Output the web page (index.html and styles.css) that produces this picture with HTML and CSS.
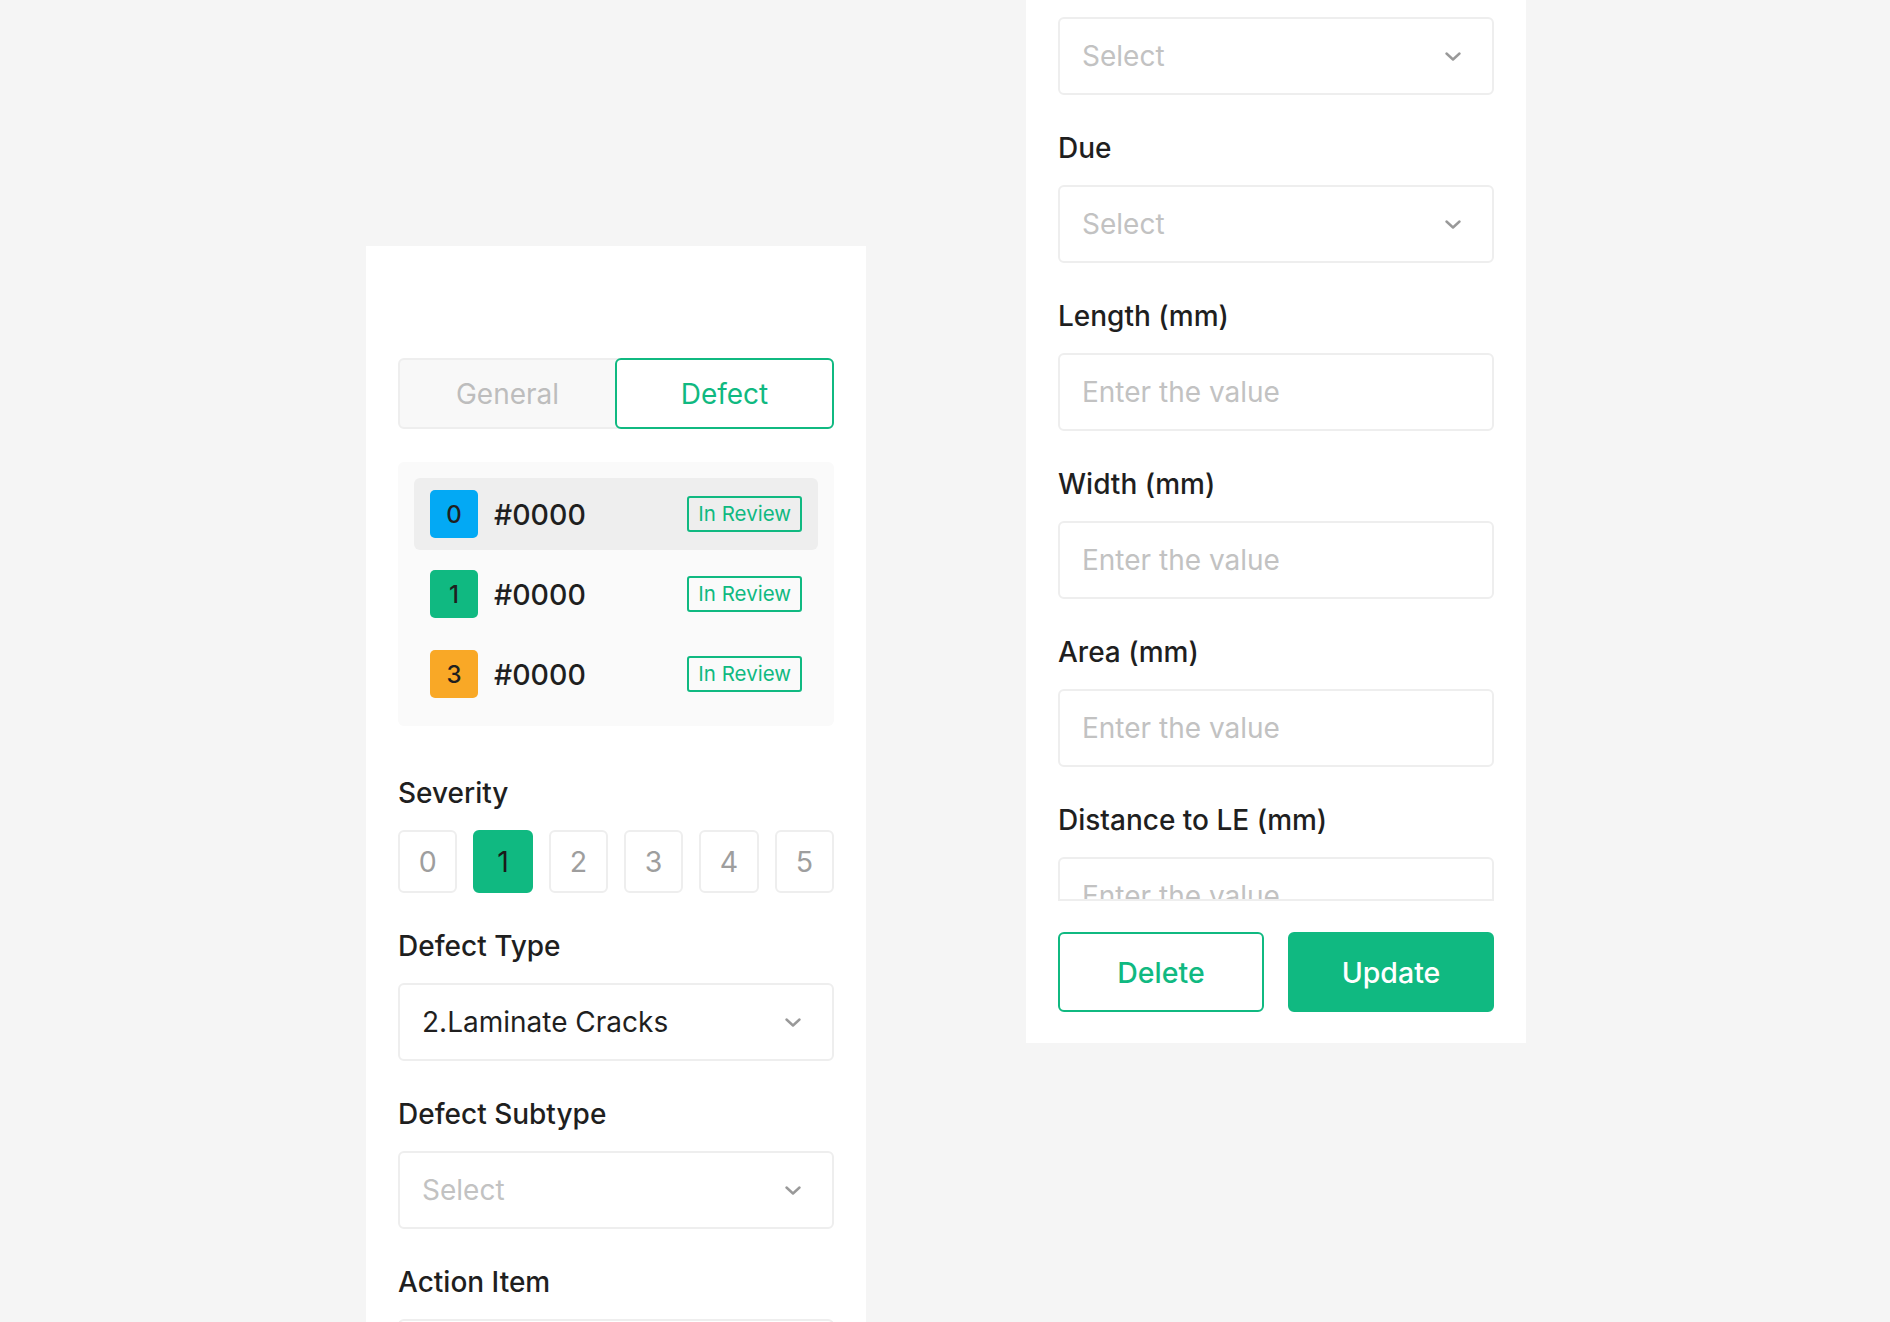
FILE: index.html
```html
<!DOCTYPE html>
<html lang="en">
<head>
    <meta charset="UTF-8">
    <meta name="viewport" content="width=device-width, initial-scale=1.0">
    <title>Defect Details</title>
    <link rel="stylesheet" href="styles.css">
</head>
<body>
    <div class="page">
        <div class="panel panel-left">
            <div class="tabs">
                <div class="tab">General</div>
                <div class="tab active">Defect</div>
            </div>
            <ul class="defects">
                <li class="defect selected">
                    <span class="num blue">0</span>
                    <span class="code">#0000</span>
                    <span class="status">In Review</span>
                </li>
                <li class="defect">
                    <span class="num green">1</span>
                    <span class="code">#0000</span>
                    <span class="status">In Review</span>
                </li>
                <li class="defect">
                    <span class="num orange">3</span>
                    <span class="code">#0000</span>
                    <span class="status">In Review</span>
                </li>
            </ul>
            <div class="fields first">
                <div class="field">
                    <label>Severity</label>
                    <div class="severity">
                        <button>0</button>
                        <button class="active">1</button>
                        <button>2</button>
                        <button>3</button>
                        <button>4</button>
                        <button>5</button>
                    </div>
                </div>
                <div class="field">
                    <label>Defect Type</label>
                    <div class="select">
                        <span class="value">2.Laminate Cracks</span>
                        <svg class="chevron" width="16" height="9" viewBox="0 0 16 9"><path d="M1.5 1.5 L8 7.5 L14.5 1.5" fill="none" stroke="#999" stroke-width="2.4" stroke-linecap="round" stroke-linejoin="round"/></svg>
                    </div>
                </div>
                <div class="field">
                    <label>Defect Subtype</label>
                    <div class="select">
                        <span class="placeholder">Select</span>
                        <svg class="chevron" width="16" height="9" viewBox="0 0 16 9"><path d="M1.5 1.5 L8 7.5 L14.5 1.5" fill="none" stroke="#999" stroke-width="2.4" stroke-linecap="round" stroke-linejoin="round"/></svg>
                    </div>
                </div>
                <div class="field">
                    <label>Action Item</label>
                    <div class="select">
                        <span class="placeholder">Select</span>
                        <svg class="chevron" width="16" height="9" viewBox="0 0 16 9"><path d="M1.5 1.5 L8 7.5 L14.5 1.5" fill="none" stroke="#999" stroke-width="2.4" stroke-linecap="round" stroke-linejoin="round"/></svg>
                    </div>
                </div>
            </div>
        </div>

        <div class="panel panel-right">
            <div class="scroll">
                <div class="fields">
                    <div class="field">
                        <div class="select">
                            <span class="placeholder">Select</span>
                            <svg class="chevron" width="16" height="9" viewBox="0 0 16 9"><path d="M1.5 1.5 L8 7.5 L14.5 1.5" fill="none" stroke="#999" stroke-width="2.4" stroke-linecap="round" stroke-linejoin="round"/></svg>
                        </div>
                    </div>
                    <div class="field">
                        <label>Due</label>
                        <div class="select">
                            <span class="placeholder">Select</span>
                            <svg class="chevron" width="16" height="9" viewBox="0 0 16 9"><path d="M1.5 1.5 L8 7.5 L14.5 1.5" fill="none" stroke="#999" stroke-width="2.4" stroke-linecap="round" stroke-linejoin="round"/></svg>
                        </div>
                    </div>
                    <div class="field">
                        <label>Length (mm)</label>
                        <input type="text" placeholder="Enter the value">
                    </div>
                    <div class="field">
                        <label>Width (mm)</label>
                        <input type="text" placeholder="Enter the value">
                    </div>
                    <div class="field">
                        <label>Area (mm)</label>
                        <input type="text" placeholder="Enter the value">
                    </div>
                    <div class="field">
                        <label>Distance to LE (mm)</label>
                        <input type="text" placeholder="Enter the value">
                    </div>
                </div>
            </div>
            <div class="actions">
                <button class="btn btn-outline">Delete</button>
                <button class="btn btn-primary">Update</button>
            </div>
        </div>
    </div>
</body>
</html>
```

FILE: styles.css
```css
body {
    margin: 0;
    height: 1322px;
    overflow: hidden;
    background: #f5f5f5;
    font-family: Inter, "Noto Sans", sans-serif;
    font-weight: 450;
    color: #1f1f1f;
}
.page {
    display: flex;
    align-items: flex-start;
    gap: 160px;
    padding-left: 366px;
}
.panel {
    width: 500px;
    box-sizing: border-box;
    background: #fff;
    padding: 0 32px;
}
.panel-left {
    margin-top: 246px;
    padding-top: 112px;
    padding-bottom: 60px;
}
.panel-right {
    padding-bottom: 31px;
}

/* tabs */
.tabs {
    display: flex;
    height: 71px;
    box-sizing: border-box;
    border: 2px solid #eeeeee;
    background: #f8f8f8;
    border-radius: 6px;
}
.tab {
    flex: 1;
    display: flex;
    align-items: center;
    justify-content: center;
    font-size: 28px;
    font-weight: 420;
    color: #bdbdbd;
}
.tab.active {
    margin: -2px -2px -2px 0;
    border: 2px solid #10b981;
    border-radius: 6px;
    background: #fff;
    color: #10b981;
}

/* defect list */
.defects {
    list-style: none;
    margin: 33px 0 0;
    padding: 16px;
    background: #fafafa;
    border-radius: 6px;
    display: flex;
    flex-direction: column;
    gap: 8px;
}
.defect {
    display: flex;
    align-items: center;
    gap: 16px;
    height: 72px;
    padding: 0 16px;
    border-radius: 6px;
}
.defect.selected {
    background: #eeeeee;
}
.num {
    width: 48px;
    height: 48px;
    border-radius: 5px;
    display: flex;
    align-items: center;
    justify-content: center;
    font-size: 24px;
    color: #1f1f1f;
}
.num.blue { background: #03a9f4; }
.num.green { background: #10b981; }
.num.orange { background: #f9a826; }
.code {
    flex: 1;
    font-size: 28.5px;
}
.status {
    height: 36px;
    box-sizing: border-box;
    padding: 0 9px;
    border: 2px solid #10b981;
    border-radius: 3px;
    color: #10b981;
    font-size: 20.5px;
    font-weight: 420;
    line-height: 32px;
}

/* form fields */
.fields.first {
    margin-top: 50px;
}
.field + .field {
    margin-top: 36px;
}
.field label {
    display: block;
    font-size: 28px;
    line-height: 35px;
    margin-bottom: 19px;
    color: #1f1f1f;
}
.severity {
    display: flex;
    gap: 16px;
}
.severity button {
    flex: 1;
    height: 63px;
    border: 2px solid #eeeeee;
    border-radius: 6px;
    background: #fff;
    font-family: inherit;
    font-weight: 400;
    font-size: 28.5px;
    color: #9e9e9e;
    padding: 0;
}
.severity button.active {
    background: #10b981;
    border-color: #10b981;
    color: #1a1a1a;
}
.select, .field input {
    display: flex;
    align-items: center;
    width: 100%;
    height: 78px;
    box-sizing: border-box;
    border: 2px solid #eeeeee;
    border-radius: 6px;
    background: #fff;
    padding: 0 31px 0 22px;
    font-family: inherit;
    font-weight: 400;
    font-size: 28px;
    color: #1f1f1f;
}
.select .value,
.select .placeholder {
    flex: 1;
}
.select .placeholder,
.field input::placeholder {
    color: #c2c2c2;
}
.field input {
    outline: none;
}

/* right panel */
.scroll {
    height: 901px;
    overflow: hidden;
    border-bottom: 2px solid #eeeeee;
    box-sizing: border-box;
}
.scroll .fields {
    padding-top: 17px;
}
.actions {
    display: flex;
    gap: 24px;
    margin-top: 31px;
}
.btn {
    flex: 1;
    height: 80px;
    border-radius: 6px;
    font-family: inherit;
    font-weight: inherit;
    font-size: 28.5px;
    cursor: pointer;
}
.btn-outline {
    background: #fff;
    border: 2px solid #10b981;
    color: #10b981;
}
.btn-primary {
    background: #10b981;
    border: 2px solid #10b981;
    color: #fff;
}
```
